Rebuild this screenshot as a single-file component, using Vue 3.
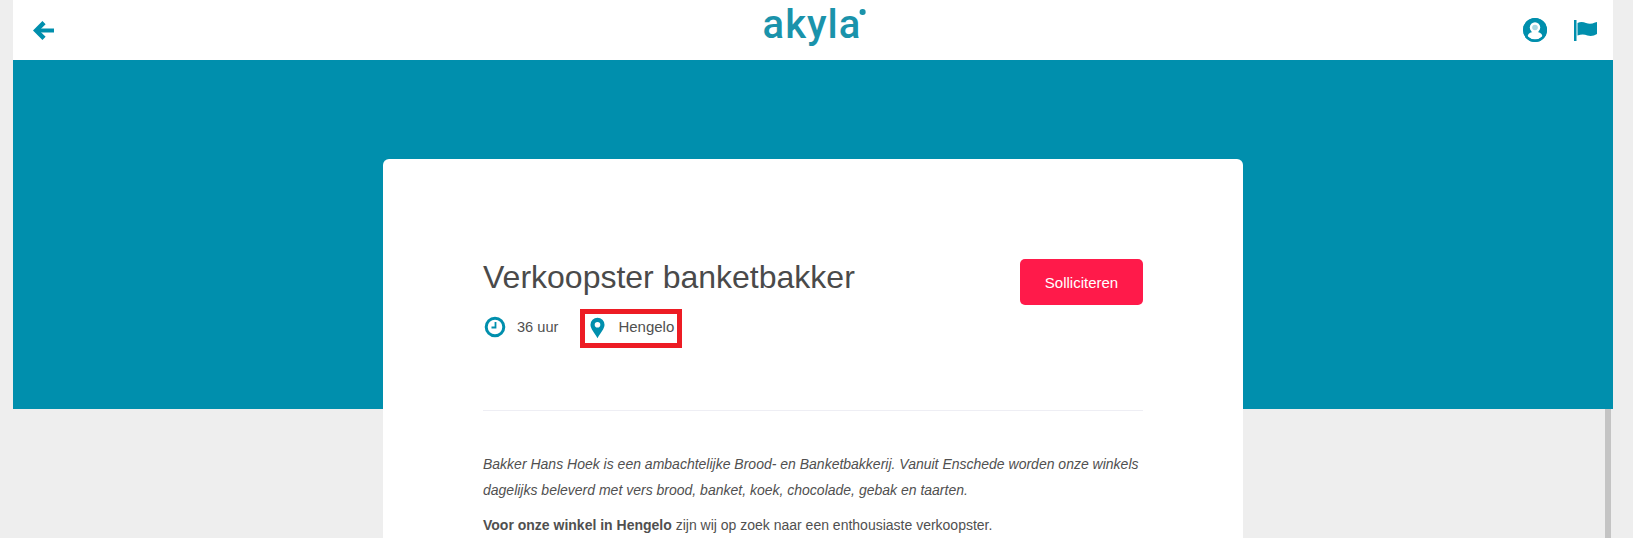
<script setup>
const intro = 'Bakker Hans Hoek is een ambachtelijke Brood- en Banketbakkerij. Vanuit Enschede worden onze winkels dagelijks beleverd met vers brood, banket, koek, chocolade, gebak en taarten.';
</script>

<template>
  <div class="page">
    <div class="frame">
      <header class="topbar">
        <svg class="back" viewBox="0 0 20 20" width="21" height="21">
          <path d="M10.500 2.500 3 10l7.500 7.500" fill="none" stroke="#008fad" stroke-width="4.300" />
          <path d="M4 10H20" fill="none" stroke="#008fad" stroke-width="3.800" />
        </svg>
        <div class="logo">akyla<span class="logo-dot"></span></div>
        <div class="top-icons">
          <svg viewBox="0 0 24 24" width="24" height="24">
            <circle cx="12" cy="12" r="12" fill="#008fad" />
            <circle cx="12" cy="9.500" r="5.200" fill="#fff" />
            <circle cx="12" cy="9.500" r="2.800" fill="#a8d7e2" />
            <path d="M4.500 18.200c1-3.200 3.500-4.400 7.500-4.400s6.500 1.200 7.500 4.400a10 10 0 0 1-15 0z" fill="#fff" />
            <circle cx="12" cy="12" r="10.800" fill="none" stroke="#008fad" stroke-width="2.400" />
          </svg>
          <svg viewBox="0 0 23 21" width="23" height="21">
            <path d="M0 0h2.500v21H0z" fill="#008fad" />
            <path d="M3.500 3c3-1.500 6-1 8.500 0 3 1.200 6 1 9-.5l2-.5v12c-3 2-6.500 2.500-9.500 1.500-3-1.200-6-1.500-10 0z" fill="#008fad" />
          </svg>
        </div>
      </header>
      <div class="hero"></div>
      <main class="card">
        <div class="head">
          <div>
            <h1>Verkoopster banketbakker</h1>
            <div class="meta">
              <span class="meta-item hours">
                <svg viewBox="0 0 22 22" width="22" height="22">
                  <circle cx="11" cy="11" r="8.800" fill="none" stroke="#008fad" stroke-width="3" />
                  <path d="M11.500 6v5.500H7.500" fill="none" stroke="#008fad" stroke-width="1.800" />
                </svg>
                <span class="label">36 uur</span>
              </span>
              <span class="meta-item marked">
                <svg viewBox="0 0 16 22" width="15" height="22">
                  <path fill-rule="evenodd" d="M8 0a7.500 7.500 0 0 0-7.500 7.500C.5 12 5 16 8 22c3-6 7.500-10 7.500-14.500A7.500 7.500 0 0 0 8 0zm0 4.500a3 3 0 1 1 0 6 3 3 0 0 1 0-6z" fill="#008fad" />
                </svg>
                <span class="label">Hengelo</span>
              </span>
            </div>
          </div>
          <button class="apply">Solliciteren</button>
        </div>
        <hr />
        <p class="intro">{{ intro }}</p>
        <p><b>Voor onze winkel in Hengelo</b> zijn wij op zoek naar een enthousiaste verkoopster.</p>
      </main>
    </div>
    <div class="scrollbar"></div>
  </div>
</template>

<style scoped>
.page {
  height: 538px;
  overflow: hidden;
  background: #eeeeee;
  position: relative;
  font-family: "Liberation Sans", Arial, sans-serif;
  color: #4a4a4a;
}
.frame {
  width: 1600px;
  margin-left: 13px;
}
.topbar {
  height: 60px;
  background: #fff;
  display: flex;
  align-items: center;
  justify-content: space-between;
  padding: 0 20px;
  box-sizing: border-box;
  position: relative;
}
.logo {
  position: absolute;
  left: 50%;
  top: 1px;
  transform: translateX(-50%);
  margin-left: -1px;
  font-family: Roboto, sans-serif;
  font-weight: 500;
  font-size: 40px;
  line-height: normal;
  letter-spacing: 1px;
  color: #1a93ab;
}
.logo-dot {
  position: absolute;
  right: -4px;
  top: 8px;
  width: 5.500px;
  height: 5.500px;
  border-radius: 50%;
  background: #1a93ab;
}
.top-icons {
  display: flex;
  align-items: center;
  gap: 27px;
  margin-right: -4px;
}
.hero {
  height: 349px;
  background: #008fad;
}
.card {
  width: 860px;
  margin: -250px auto 0;
  position: relative;
  background: #fff;
  border-radius: 6px 6px 0 0;
  padding: 100px 100px 0;
  box-sizing: border-box;
  height: 500px;
  font-size: 14px;
  line-height: 26px;
  color: #505050;
}
.head {
  display: flex;
  justify-content: space-between;
  align-items: flex-start;
}
h1 {
  margin: 0;
  font-weight: 400;
  font-size: 32px;
  line-height: 36px;
  color: #4a4a4a;
}
.meta {
  display: flex;
  align-items: center;
  gap: 22px;
  margin-top: 14px;
  font-size: 14.600px;
}
.meta-item {
  display: flex;
  align-items: center;
  gap: 11px;
}
.hours {
  margin-left: 1px;
}
.hours svg {
  margin-top: -3px;
}
.label {
  margin-top: -3px;
}
.marked {
  box-sizing: border-box;
  height: 39px;
  border: 5px solid #ed1c24;
  padding: 0 3px 0 5px;
  gap: 13px;
  font-size: 15px;
}
.marked svg {
  margin-top: -1px;
}
.apply {
  width: 123px;
  height: 46px;
  border: 0;
  border-radius: 5px;
  background: #ff1a4a;
  color: #fff;
  font: 15px "Liberation Sans", Arial, sans-serif;
}
hr {
  border: 0;
  border-top: 1px solid #eeeef4;
  margin: 62px 0 0;
}
p {
  margin: 0 0 9px;
}
.intro {
  margin-top: 40px;
  font-style: italic;
}
.scrollbar {
  position: absolute;
  left: 1605px;
  top: 409px;
  width: 6px;
  bottom: 0;
  background: #c4c4c4;
}
</style>
